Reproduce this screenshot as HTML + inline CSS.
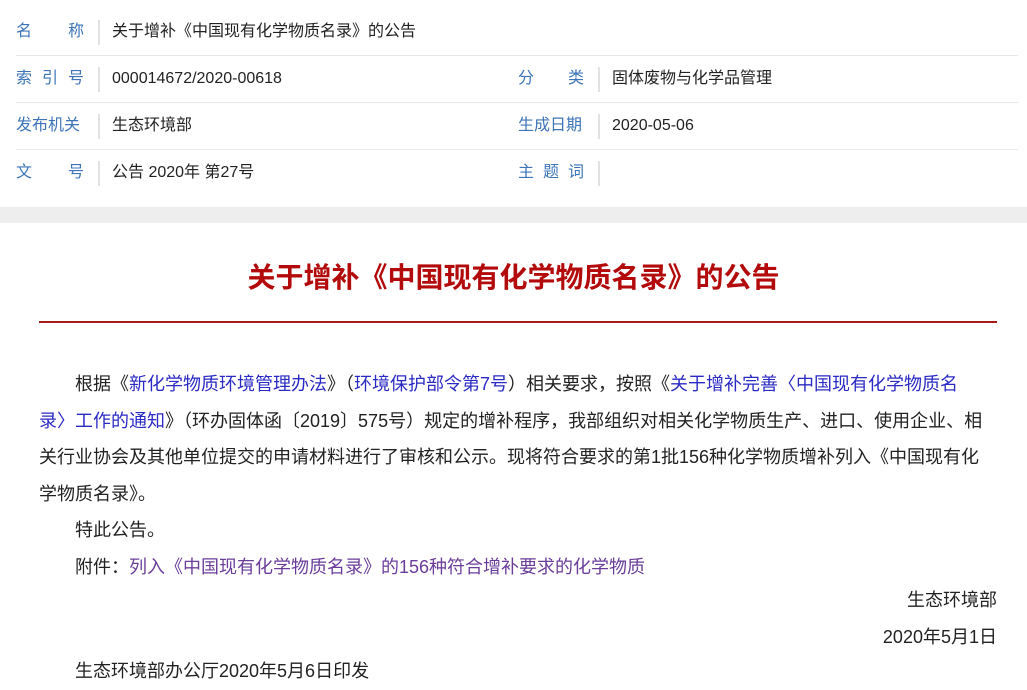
<!DOCTYPE html>
<html><head><meta charset="utf-8"><style>
body{margin:0;width:1027px;height:689px;overflow:hidden;background:#fff;font-family:"Liberation Sans","Microsoft YaHei","Noto Sans CJK SC",sans-serif;color:#222}
.row{position:absolute;left:16px;width:1002px;height:46px;border-bottom:1px solid #e8e8e8}
.lab{position:absolute;top:0;height:46px;line-height:46px;color:#3d74b8;font-size:16px;width:80px}
.sep{position:absolute;top:11px;width:2px;height:25px;background:#e2e2e2}
.val{position:absolute;top:0;height:46px;line-height:46px;font-size:16px;color:#222}
.j{display:flex;justify-content:space-between}
.band{position:absolute;left:0;top:207px;width:1027px;height:16px;background:#eeeeee}
h1{position:absolute;left:0;top:258px;width:1027px;margin:0;text-align:center;color:#b30b0b;font-size:28px;font-weight:bold;line-height:40px}
.rl{position:absolute;left:39px;top:321px;width:958px;height:2px;background:#a8191c}
.p{position:absolute;left:39px;width:958px;font-size:18px;line-height:36.5px;white-space:nowrap}
a{color:#2a2ac4;text-decoration:none}
a.v{color:#6a3d9a}
</style></head><body>
<div class="row" style="top:9px"><div class="lab j" style="left:0;width:68px"><span>名</span><span>称</span></div><div class="sep" style="left:82px"></div><div class="val" style="left:96px">关于增补《中国现有化学物质名录》的公告</div></div>
<div class="row" style="top:56px"><div class="lab j" style="left:0;width:68px"><span>索</span><span>引</span><span>号</span></div><div class="sep" style="left:82px"></div><div class="val" style="left:96px">000014672/2020-00618</div>
<div class="lab j" style="left:502px;width:66px"><span>分</span><span>类</span></div><div class="sep" style="left:582px"></div><div class="val" style="left:596px">固体废物与化学品管理</div></div>
<div class="row" style="top:103px"><div class="lab" style="left:0">发布机关</div><div class="sep" style="left:82px"></div><div class="val" style="left:96px">生态环境部</div>
<div class="lab" style="left:502px">生成日期</div><div class="sep" style="left:582px"></div><div class="val" style="left:596px">2020-05-06</div></div>
<div class="row" style="top:150px;border-bottom:none"><div class="lab j" style="left:0;width:68px"><span>文</span><span>号</span></div><div class="sep" style="left:82px"></div><div class="val" style="left:96px">公告 2020年 第27号</div>
<div class="lab j" style="left:502px;width:66px"><span>主</span><span>题</span><span>词</span></div><div class="sep" style="left:582px"></div></div>
<div class="band"></div>
<h1>关于增补《中国现有化学物质名录》的公告</h1>
<div class="rl"></div>
<div class="p" style="top:366px">　　根据《<a>新化学物质环境管理办法</a>》（<a>环境保护部令第7号</a>）相关要求，按照《<a>关于增补完善〈中国现有化学物质名</a><br><a>录〉工作的通知</a>》（环办固体函〔2019〕575号）规定的增补程序，我部组织对相关化学物质生产、进口、使用企业、相<br>关行业协会及其他单位提交的申请材料进行了审核和公示。现将符合要求的第1批156种化学物质增补列入《中国现有化<br>学物质名录》。<br>　　特此公告。<br>　　附件：<a class="v">列入《中国现有化学物质名录》的156种符合增补要求的化学物质</a></div>
<div class="p" style="top:582px;text-align:right">生态环境部<br>2020年5月1日</div>
<div class="p" style="top:653px">　　生态环境部办公厅2020年5月6日印发</div>
</body></html>
